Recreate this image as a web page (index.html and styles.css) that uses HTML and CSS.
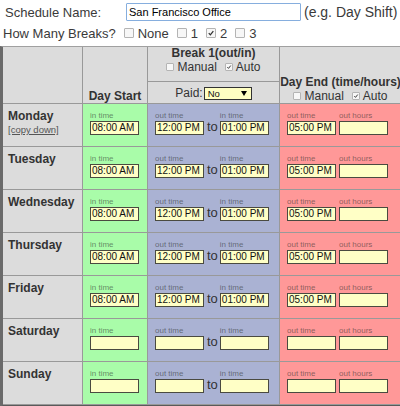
FILE: index.html
```html
<!DOCTYPE html>
<html>
<head>
<meta charset="utf-8">
<title>Schedule</title>
<link rel="stylesheet" href="styles.css">
</head>
<body>
<div class="top">
  <div class="name-row">
    <span class="lbl name-lbl">Schedule Name:</span>
    <span class="name-input">San Francisco Office</span>
    <span class="hint">(e.g. Day Shift)</span>
  </div>
  <div class="breaks-row">
    <span class="lbl">How Many Breaks?</span>
    <span class="opt"><span class="cb"></span>None</span>
    <span class="opt"><span class="cb"></span>1</span>
    <span class="opt"><span class="cb on"><svg viewBox="0 0 10 10"><path d="M2.2 5.2 L4.2 7.3 L7.9 2.6" /></svg></span>2</span>
    <span class="opt"><span class="cb"></span>3</span>
  </div>
</div>

<table class="sched">
  <thead>
    <tr>
      <th class="c1" rowspan="2"></th>
      <th class="c2 hd-bottom" rowspan="2">Day Start</th>
      <th class="c3"><div class="break-top"><div class="hd-title">Break 1(out/in)</div><div class="checks"><span class="cb sm"></span>Manual<span class="cb sm on gap"><svg viewBox="0 0 10 10"><path d="M2.2 5.2 L4.2 7.3 L7.9 2.6" /></svg></span>Auto</div></div></th>
      <th class="c4 hd-bottom" rowspan="2"><div class="hd-title2">Day End (time/hours)</div><div class="checks"><span class="cb sm"></span>Manual<span class="cb sm on gap"><svg viewBox="0 0 10 10"><path d="M2.2 5.2 L4.2 7.3 L7.9 2.6" /></svg></span>Auto</div></th>
    </tr>
    <tr>
      <th class="paid-cell"><div class="paid"><span class="paid-lbl">Paid:</span><span class="select">No<span class="arrow"></span></span></div></th>
    </tr>
  </thead>
  <tbody>
    <tr>
      <td class="day"><div class="day-in"><div class="dname">Monday</div><div class="copy">[copy down]</div></div></td>
      <td class="start"><div class="cell"><div class="field"><div class="flbl">in time</div><div class="inp">08:00 AM</div></div></div></td>
      <td class="brk"><div class="cell"><div class="field"><div class="flbl">out time</div><div class="inp">12:00 PM</div></div><span class="to">to</span><div class="field"><div class="flbl">in time</div><div class="inp">01:00 PM</div></div></div></td>
      <td class="end"><div class="cell"><div class="field"><div class="flbl">out time</div><div class="inp">05:00 PM</div></div><div class="field f2"><div class="flbl">out hours</div><div class="inp"></div></div></div></td>
    </tr>
    <tr>
      <td class="day"><div class="day-in"><div class="dname">Tuesday</div></div></td>
      <td class="start"><div class="cell"><div class="field"><div class="flbl">in time</div><div class="inp">08:00 AM</div></div></div></td>
      <td class="brk"><div class="cell"><div class="field"><div class="flbl">out time</div><div class="inp">12:00 PM</div></div><span class="to">to</span><div class="field"><div class="flbl">in time</div><div class="inp">01:00 PM</div></div></div></td>
      <td class="end"><div class="cell"><div class="field"><div class="flbl">out time</div><div class="inp">05:00 PM</div></div><div class="field f2"><div class="flbl">out hours</div><div class="inp"></div></div></div></td>
    </tr>
    <tr>
      <td class="day"><div class="day-in"><div class="dname">Wednesday</div></div></td>
      <td class="start"><div class="cell"><div class="field"><div class="flbl">in time</div><div class="inp">08:00 AM</div></div></div></td>
      <td class="brk"><div class="cell"><div class="field"><div class="flbl">out time</div><div class="inp">12:00 PM</div></div><span class="to">to</span><div class="field"><div class="flbl">in time</div><div class="inp">01:00 PM</div></div></div></td>
      <td class="end"><div class="cell"><div class="field"><div class="flbl">out time</div><div class="inp">05:00 PM</div></div><div class="field f2"><div class="flbl">out hours</div><div class="inp"></div></div></div></td>
    </tr>
    <tr>
      <td class="day"><div class="day-in"><div class="dname">Thursday</div></div></td>
      <td class="start"><div class="cell"><div class="field"><div class="flbl">in time</div><div class="inp">08:00 AM</div></div></div></td>
      <td class="brk"><div class="cell"><div class="field"><div class="flbl">out time</div><div class="inp">12:00 PM</div></div><span class="to">to</span><div class="field"><div class="flbl">in time</div><div class="inp">01:00 PM</div></div></div></td>
      <td class="end"><div class="cell"><div class="field"><div class="flbl">out time</div><div class="inp">05:00 PM</div></div><div class="field f2"><div class="flbl">out hours</div><div class="inp"></div></div></div></td>
    </tr>
    <tr>
      <td class="day"><div class="day-in"><div class="dname">Friday</div></div></td>
      <td class="start"><div class="cell"><div class="field"><div class="flbl">in time</div><div class="inp">08:00 AM</div></div></div></td>
      <td class="brk"><div class="cell"><div class="field"><div class="flbl">out time</div><div class="inp">12:00 PM</div></div><span class="to">to</span><div class="field"><div class="flbl">in time</div><div class="inp">01:00 PM</div></div></div></td>
      <td class="end"><div class="cell"><div class="field"><div class="flbl">out time</div><div class="inp">05:00 PM</div></div><div class="field f2"><div class="flbl">out hours</div><div class="inp"></div></div></div></td>
    </tr>
    <tr>
      <td class="day"><div class="day-in"><div class="dname">Saturday</div></div></td>
      <td class="start"><div class="cell"><div class="field"><div class="flbl">in time</div><div class="inp"></div></div></div></td>
      <td class="brk"><div class="cell"><div class="field"><div class="flbl">out time</div><div class="inp"></div></div><span class="to">to</span><div class="field"><div class="flbl">in time</div><div class="inp"></div></div></div></td>
      <td class="end"><div class="cell"><div class="field"><div class="flbl">out time</div><div class="inp"></div></div><div class="field f2"><div class="flbl">out hours</div><div class="inp"></div></div></div></td>
    </tr>
    <tr>
      <td class="day"><div class="day-in"><div class="dname">Sunday</div></div></td>
      <td class="start"><div class="cell"><div class="field"><div class="flbl">in time</div><div class="inp"></div></div></div></td>
      <td class="brk"><div class="cell"><div class="field"><div class="flbl">out time</div><div class="inp"></div></div><span class="to">to</span><div class="field"><div class="flbl">in time</div><div class="inp"></div></div></div></td>
      <td class="end"><div class="cell"><div class="field"><div class="flbl">out time</div><div class="inp"></div></div><div class="field f2"><div class="flbl">out hours</div><div class="inp"></div></div></div></td>
    </tr>
  </tbody>
</table>
</body>
</html>
```

FILE: styles.css
```css
html, body {
  margin: 0;
  padding: 0;
  overflow: hidden;
  background: #fff;
}
body {
  font-family: "Liberation Sans", Arial, sans-serif;
  color: #333;
}

/* top form */
.name-row {
  height: 24px;
  display: flex;
  align-items: center;
  padding-left: 5px;
}
.lbl {
  font-size: 13px;
  color: #3a3a3a;
}
.name-lbl {
  width: 121px;
  flex: none;
}
.name-input {
  box-sizing: border-box;
  width: 175px;
  height: 18px;
  border: 1px solid #86aede;
  border-radius: 1px;
  font-size: 11px;
  line-height: 16px;
  padding-left: 2px;
  color: #000;
}
.hint {
  font-size: 14px;
  color: #3a3a3a;
  margin-left: 3px;
}
.breaks-row {
  height: 18px;
  padding-bottom: 4px;
  display: flex;
  align-items: center;
  padding-left: 3px;
}
.breaks-row .lbl {
  margin-right: 8px;
}
.opt {
  display: inline-flex;
  align-items: center;
  font-size: 13px;
  color: #3a3a3a;
  margin-right: 8px;
}
.cb {
  box-sizing: border-box;
  display: inline-block;
  width: 10px;
  height: 10px;
  border: 1px solid #b4b4b4;
  background: #f7f7f7;
  border-radius: 1px;
  margin-right: 4px;
}
.cb svg {
  display: block;
  width: 100%;
  height: 100%;
}
.cb svg path {
  fill: none;
  stroke: #333;
  stroke-width: 1.6;
}
.cb.sm {
  width: 8px;
  height: 8px;
  margin-right: 3px;
}
.cb.gap {
  margin-left: 8px;
}

/* table */
.sched {
  border-collapse: separate;
  border-spacing: 0;
  table-layout: fixed;
  width: 402px;
  border-left: 3px solid #6a6a6a;
  border-top: 1px solid #a0a0a0;
  border-bottom: 3px solid #5a5a5a;
}
.sched th,
.sched td {
  padding: 0;
  border-right: 1px solid #999;
  border-bottom: 1px solid #999;
}
.sched th {
  background: #dcdcdc;
  font-size: 12px;
  font-weight: bold;
  color: #333;
  text-align: center;
}
.c1 { width: 79px; }
.c2 { width: 64px; }
.c3 { width: 131px; }
.c4 { width: 121px; }

.hd-bottom {
  vertical-align: bottom;
  line-height: 14px;
}
.break-top {
  height: 34px;
}
.hd-title {
  line-height: 13px;
}
.checks {
  display: flex;
  justify-content: center;
  align-items: center;
  line-height: 14px;
  height: 14px;
  font-weight: normal;
  font-size: 12px;
}
.hd-title2 {
  line-height: 14px;
  white-space: nowrap;
}
.paid {
  height: 21px;
  display: flex;
  justify-content: center;
  align-items: center;
  font-weight: normal;
  font-size: 12px;
  padding-top: 1px;
  box-sizing: border-box;
}
.paid-lbl {
  margin-right: 1px;
}
.select {
  box-sizing: border-box;
  width: 48px;
  height: 13px;
  border: 1px solid #333;
  background: #ffffc2;
  display: flex;
  align-items: center;
  justify-content: space-between;
  padding: 0 4px 0 3px;
  font-size: 9.5px;
  color: #111;
  text-align: left;
}
.arrow {
  width: 0;
  height: 0;
  border-left: 3px solid transparent;
  border-right: 3px solid transparent;
  border-top: 5px solid #000;
}

/* body */
.day { background: #dcdcdc; vertical-align: top; }
.start { background: #a9fca9; }
.brk { background: #aab2d3; }
.end { background: #ff9898; }

.day-in {
  height: 42px;
  box-sizing: border-box;
  padding: 5px 0 0 5px;
}
.dname {
  font-size: 12px;
  font-weight: bold;
  line-height: 14px;
  color: #333;
}
.copy {
  font-size: 9.5px;
  line-height: 11px;
  margin-top: 1px;
  color: #555;
  text-decoration: underline;
}
.cell {
  height: 42px;
  box-sizing: border-box;
  padding: 6px 0 0 7px;
  display: flex;
  align-items: flex-start;
}
.field {
  display: flex;
  flex-direction: column;
}
.f2 {
  margin-left: 3px;
}
.flbl {
  font-size: 8px;
  line-height: 11px;
  color: rgba(40, 40, 40, 0.55);
  white-space: nowrap;
}
.inp {
  box-sizing: border-box;
  width: 49px;
  height: 14px;
  border: 1px solid #4a4a40;
  background: #ffffc6;
  font-size: 10px;
  line-height: 12px;
  padding-left: 1px;
  color: #111;
  white-space: nowrap;
}
.to {
  font-size: 13px;
  line-height: 14px;
  color: #333;
  margin: 0 2px 0 3px;
  padding-top: 10px;
}
```
